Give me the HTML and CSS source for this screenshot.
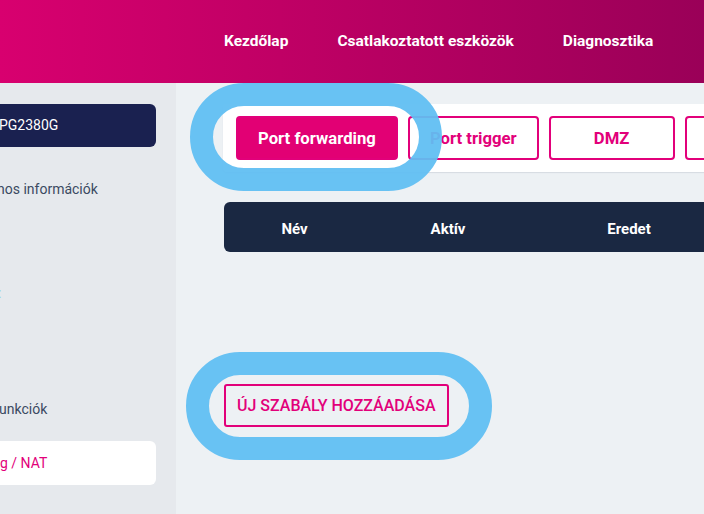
FILE: index.html
```html
<!DOCTYPE html>
<html lang="hu">
<head>
<meta charset="utf-8">
<title>Port forwarding</title>
<link rel="stylesheet" href="styles.css">
</head>
<body>
<header class="topbar">
  <nav class="nav">
    <a class="nav-link">Kezdőlap</a>
    <a class="nav-link">Csatlakoztatott eszközök</a>
    <a class="nav-link">Diagnosztika</a>
  </nav>
</header>
<div class="layout">
  <aside class="sidebar">
    <div class="side-list">
      <div class="side-item device">PG2380G</div>
      <div class="side-item gap-info">nos információk</div>
      <div class="side-item mark gap-mark">:</div>
      <div class="side-item gap-func">unkciók</div>
      <div class="side-item active gap-active">g / NAT</div>
      <div class="side-item gap-last">Címek</div>
    </div>
  </aside>
  <main class="main">
    <div class="tab-card">
      <button class="tab tab-active">Port forwarding</button>
      <button class="tab">Port trigger</button>
      <button class="tab">DMZ</button>
      <button class="tab">UPnP</button>
    </div>
    <div class="table-head">
      <div class="th">Név</div>
      <div class="th">Aktív</div>
      <div class="th">Eredet</div>
      <div class="th"></div>
    </div>
    <button class="add-btn">ÚJ SZABÁLY HOZZÁADÁSA</button>
    <div class="ring ring-tabs"></div>
    <div class="ring ring-add"></div>
  </main>
</div>
</body>
</html>
```

FILE: styles.css
```css
* { box-sizing: border-box; }
html, body {
  margin: 0;
  padding: 0;
  width: 704px;
  height: 514px;
  overflow: hidden;
  font-family: Roboto, "Liberation Sans", sans-serif;
}
.topbar {
  height: 83px;
  background: linear-gradient(90deg, #d8006f 0%, #c30066 35%, #9a0058 100%);
  display: flex;
  align-items: center;
  position: relative;
  z-index: 2;
}
.nav {
  display: flex;
  gap: 49px;
  padding-left: 224px;
  padding-bottom: 1px;
}
.nav-link {
  color: #ffffff;
  font-weight: 700;
  font-size: 15.5px;
  white-space: nowrap;
}
.layout {
  display: flex;
  height: 431px;
}
.sidebar {
  width: 176px;
  flex: none;
  background: #e6e9ed;
  overflow: hidden;
}
.side-list {
  display: flex;
  flex-direction: column;
  margin-left: -17px;
  margin-right: 20px;
  padding-top: 21px;
}
.side-item {
  height: 44px;
  line-height: 44px;
  padding-left: 16px;
  font-size: 14px;
  color: #3b4a62;
  white-space: nowrap;
  border-radius: 6px;
}
.device {
  height: 43px;
  line-height: 43px;
  background: #1a2150;
  color: #ffffff;
  font-size: 14px;
}
.gap-info { margin-top: 20px; padding-left: 14px; }
.gap-mark { margin-top: 60px; color: #8fd0e6; padding-left: 15px; }
.gap-func { margin-top: 72px; }
.gap-active { margin-top: 10px; }
.active {
  background: #ffffff;
  color: #e2007a;
  padding-left: 17px;
}
.gap-last { margin-top: 17px; padding-left: 17px; }
.main {
  flex: 1;
  background: #edf1f4;
  position: relative;
  overflow: hidden;
  padding-top: 21px;
  padding-left: 47px;
}
.tab-card {
  display: flex;
  gap: 10px;
  width: 600px;
  height: 68px;
  padding: 12px 13px;
  background: #ffffff;
  border-radius: 4px 0 0 4px;
  box-shadow: 0 1px 1px rgba(40, 60, 80, 0.12);
}
.tab {
  height: 44px;
  min-width: 126px;
  padding: 0 20px;
  font-family: Roboto, "Liberation Sans", sans-serif;
  font-size: 16.7px;
  font-weight: 700;
  color: #e2007a;
  background: #ffffff;
  border: 2px solid #e2007a;
  border-radius: 4px;
  white-space: nowrap;
  flex: none;
}
.tab-active {
  background: #e20074;
  color: #ffffff;
}
.table-head {
  margin-top: 30px;
  display: grid;
  grid-template-columns: 141px 166px 196px 200px;
  width: 700px;
  height: 50px;
  padding-top: 3px;
  align-items: center;
  background: #1a2842;
  border-radius: 6px;
  margin-left: 1px;
}
.th {
  text-align: center;
  color: #ffffff;
  font-weight: 700;
  font-size: 15px;
}
.add-btn {
  display: block;
  margin-top: 132px;
  margin-left: 1px;
  height: 43px;
  padding: 0 11px;
  font-family: Roboto, "Liberation Sans", sans-serif;
  font-size: 16px;
  font-weight: 500;
  color: #e2007a;
  background: transparent;
  border: 2px solid #e2007a;
  border-radius: 3px;
  white-space: nowrap;
}
.ring {
  position: absolute;
  border: 23px solid rgba(96, 190, 242, 0.94);
  border-radius: 999px;
  pointer-events: none;
}
.ring-tabs {
  left: 14px;
  top: 0;
  width: 252px;
  height: 108px;
}
.ring-add {
  left: 10px;
  top: 269px;
  width: 306px;
  height: 108px;
}
```
